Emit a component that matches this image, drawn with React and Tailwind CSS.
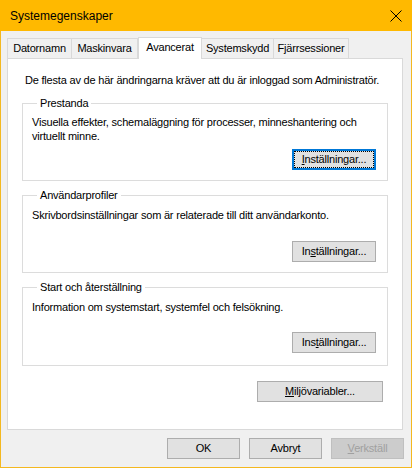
import React from "react";

const tabs = [
  { label: "Datornamn", w: "w-[65px]" },
  { label: "Maskinvara", w: "w-[66px]" },
  { label: "Avancerat", w: "w-[64px]", active: true },
  { label: "Systemskydd", w: "w-[72px]" },
  { label: "Fjärrsessioner", w: "w-[75px]" },
];

function WinButton({ children, className = "", focused, disabled }) {
  return (
    <button
      type="button"
      className={`flex items-center justify-center text-[11px] leading-none ${
        disabled
          ? "bg-[#cccccc] border border-[#bfbfbf] text-[#a0a0a0]"
          : focused
          ? "bg-[#e1e1e1] border-2 border-[#0078d7] text-black"
          : "bg-[#e1e1e1] border border-[#adadad] text-black"
      } ${className}`}
    >
      {focused ? (
        <span className="flex items-center justify-center w-full h-full border border-dotted border-black">
          {children}
        </span>
      ) : (
        children
      )}
    </button>
  );
}

function Group({ title, height, children }) {
  return (
    <fieldset className={`mx-[14px] border border-[#dcdcdc] pl-[9px] pr-[11px] ${height}`}>
      <legend className="ml-[5px] px-[3px] leading-[14px]">{title}</legend>
      {children}
    </fieldset>
  );
}

export default function App() {
  return (
    <div
      className="w-[412px] h-[468px] flex flex-col bg-[#f0f0f0] border-x border-b border-[#f4b81f] text-[11px] tracking-[-0.2px] text-black"
      style={{ fontFamily: '"Liberation Sans", Arial, sans-serif' }}
    >
      {/* title bar */}
      <div className="-mx-px h-[31px] bg-[#ffb900] flex items-center justify-between pl-[10px] pr-[9px]">
        <span className="text-[12px] tracking-normal">Systemegenskaper</span>
        <svg width="12" height="12" viewBox="0 0 12 12" className="mr-[1px]">
          <path d="M0.5 0.5 L11.5 11.5 M11.5 0.5 L0.5 11.5" stroke="#000" strokeWidth="1" />
        </svg>
      </div>

      {/* tabs */}
      <div className="flex items-end pl-[6px] mt-[6px] h-[21px]">
        {tabs.map((t, i) =>
          t.active ? (
            <div
              key={t.label}
              className={`${t.w} h-[22px] -mb-px relative z-10 bg-white border-x border-t border-[#d9d9d9] flex items-center justify-center pb-[2px]`}
            >
              {t.label}
            </div>
          ) : (
            <div
              key={t.label}
              className={`${t.w} h-[20px] border-t border-r ${i === 0 ? "border-l" : ""} border-[#d9d9d9] flex items-center justify-center bg-[#f0f0f0]`}
            >
              {t.label}
            </div>
          )
        )}
      </div>

      {/* panel */}
      <div className="ml-[6px] w-[396px] h-[372px] bg-white border border-[#d9d9d9] flex flex-col pt-[14px]">
        <p className="pl-[17px] leading-[14px]">
          De flesta av de här ändringarna kräver att du är inloggad som Administratör.
        </p>

        <div className="mt-[9px] flex flex-col gap-[7px]">
          <Group title="Prestanda" height="h-[85px]">
            <p className="mt-[5px] leading-[14px]">
              Visuella effekter, schemaläggning för processer, minneshantering och virtuellt minne.
            </p>
            <div className="flex justify-end mt-[6px]">
              <WinButton focused className="w-[84px] h-[21px]">
                <span>
                  <u>I</u>nställningar...
                </span>
              </WinButton>
            </div>
          </Group>

          <Group title="Användarprofiler" height="h-[85px]">
            <p className="mt-[6px] leading-[14px]">
              Skrivbordsinställningar som är relaterade till ditt användarkonto.
            </p>
            <div className="flex justify-end mt-[19px]">
              <WinButton className="w-[84px] h-[21px]">
                <span>
                  In<u>s</u>tällningar...
                </span>
              </WinButton>
            </div>
          </Group>

          <Group title="Start och återställning" height="h-[86px]">
            <p className="mt-[6px] leading-[14px]">
              Information om systemstart, systemfel och felsökning.
            </p>
            <div className="flex justify-end mt-[18px]">
              <WinButton className="w-[84px] h-[21px]">
                <span>
                  Ins<u>t</u>ällningar...
                </span>
              </WinButton>
            </div>
          </Group>
        </div>

        <div className="flex justify-end pr-[19px] mt-[15px]">
          <WinButton className="w-[126px] h-[21px]">
            <span>
              <u>M</u>iljövariabler...
            </span>
          </WinButton>
        </div>
      </div>

      {/* bottom buttons */}
      <div className="flex justify-end gap-[9px] pr-[7px] mt-[8px]">
        <WinButton className="w-[73px] h-[21px]">OK</WinButton>
        <WinButton className="w-[73px] h-[21px]">Avbryt</WinButton>
        <WinButton disabled className="w-[73px] h-[21px]">
          <span>
            <u>V</u>erkställ
          </span>
        </WinButton>
      </div>
    </div>
  );
}
